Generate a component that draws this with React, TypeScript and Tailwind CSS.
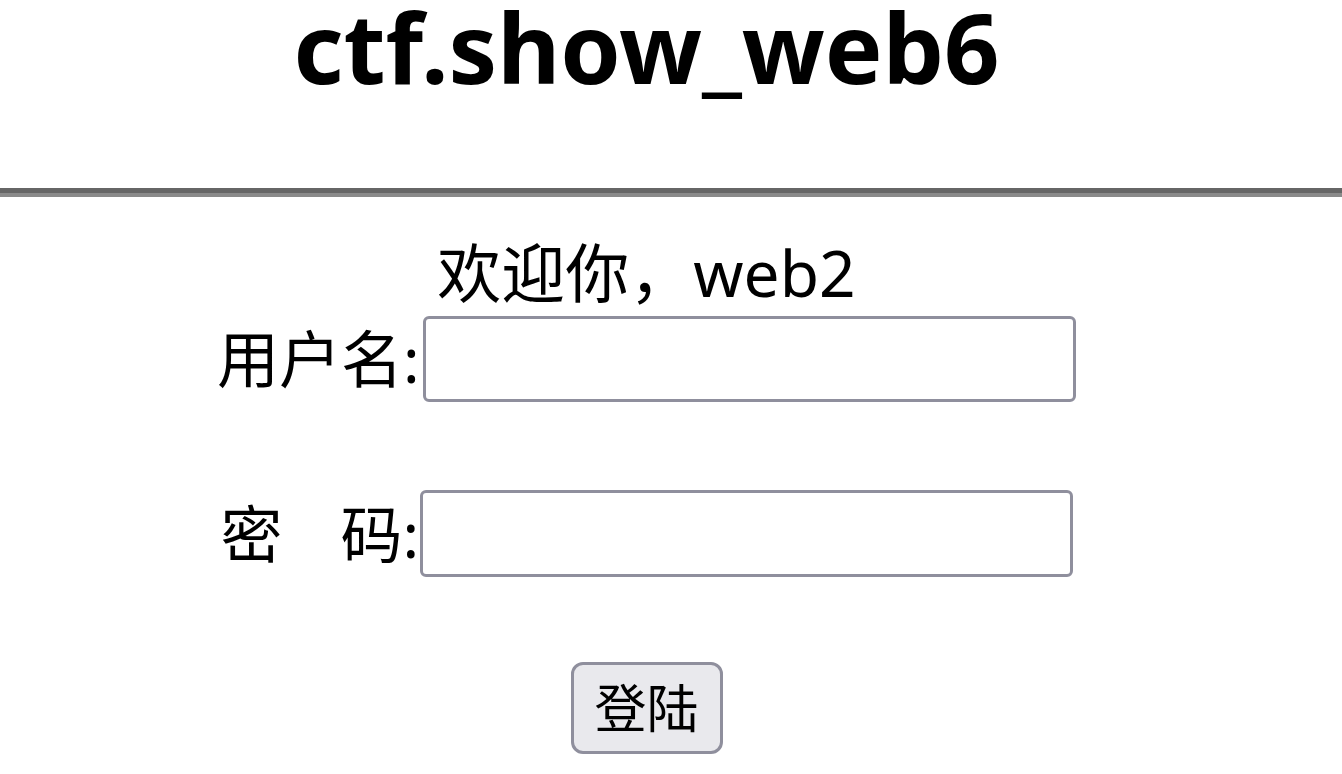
export default function App() {
  const font = { fontFamily: '"Noto Sans", "Noto Sans CJK SC", sans-serif' };
  return (
    <div className="w-[1342px] h-[774px] overflow-hidden bg-white text-black" style={font}>
      <div className="w-[1293px] h-[188px] flex flex-col items-center">
        <h1 className="text-[97px] font-bold leading-[92px]">ctf.show_web6</h1>
      </div>
      <div className="h-[9px] border-t-[5px] border-t-[#666666] border-b-[4px] border-b-[#8a8a8a]" />
      <div className="w-[1293px] flex flex-col items-center">
        <div className="text-[64px] leading-none mt-[44px] h-[75px]">欢迎你，web2</div>
        <div className="flex items-center text-[62px] leading-none">
          <span className="w-[206px]">用户名:</span>
          <div className="w-[653px] h-[86px] border-[3px] border-[#8f8f9d] rounded-[6px] bg-white" />
        </div>
        <div className="flex items-center text-[62px] leading-none mt-[88px]">
          <span className="w-[199px] flex">
            <span>密</span>
            <span className="ml-[58px]">码:</span>
          </span>
          <div className="w-[653px] h-[87px] border-[3px] border-[#8f8f9d] rounded-[6px] bg-white" />
        </div>
        <button className="mt-[85px] w-[152px] h-[92px] border-[3px] border-[#8f8f9d] rounded-[12px] bg-[#e9e9ed] text-[52px] leading-none flex items-center justify-center">
          登陆
        </button>
      </div>
    </div>
  );
}
